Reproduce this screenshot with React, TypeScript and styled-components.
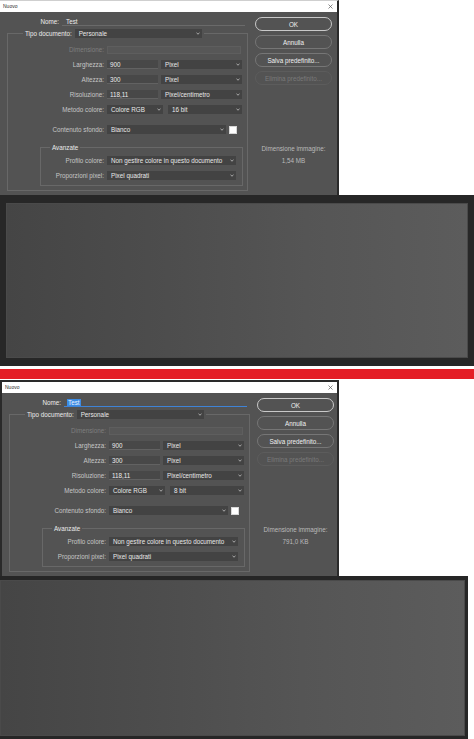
import React from 'react';
import styled, { createGlobalStyle } from 'styled-components';

const Global = createGlobalStyle`
  html, body { margin: 0; padding: 0; background: #ffffff; }
  body {
    width: 474px; height: 739px; overflow: hidden;
    font-family: "Liberation Sans", Arial, sans-serif;
  }
  * { box-sizing: border-box; }
`;

const Page = styled.div`
  display: flex;
  flex-direction: column;
  width: 474px;
  height: 739px;
  background: #ffffff;
`;

const TopRow = styled.div`
  display: flex;
  height: 195px;
`;

const Dialog = styled.div<{ $framed?: boolean }>`
  width: 339px;
  height: ${p => (p.$framed ? 196 : 195)}px;
  display: flex;
  flex-direction: column;
  background: #535353;
  border-right: 2px solid #2a2a2a;
  border-left: ${p => (p.$framed ? '2px solid #2a2a2a' : '0')};
  border-top: ${p => (p.$framed ? '2px solid #2a2a2a' : '1px solid #cfcfcf')};
`;

const TitleBar = styled.div`
  height: 11px;
  flex: none;
  background: #ffffff;
  display: flex;
  align-items: center;
  justify-content: space-between;
  padding: 0 4px 0 3px;
`;

const TitleText = styled.span`
  font-size: 5px;
  line-height: 11px;
  color: #2b2b2b;
`;

const DialogBody = styled.div`
  flex: 1;
  display: flex;
`;

const FormColumn = styled.div`
  width: 255px;
  display: flex;
  flex-direction: column;
`;

const NameRow = styled.div`
  display: flex;
  align-items: stretch;
  height: 9px;
  margin-top: 5px;
  gap: 3px;
`;

type Tone = 'bright' | 'normal' | 'disabled';

const Label = styled.span<{ $width: number; $tone?: Tone }>`
  width: ${p => p.$width}px;
  flex: none;
  text-align: right;
  font-size: 6.3px;
  line-height: 9px;
  white-space: nowrap;
  color: ${p => (p.$tone === 'bright' ? '#ededed' : p.$tone === 'disabled' ? '#7e7e7e' : '#c6c6c6')};
`;

const NameField = styled.div<{ $focused?: boolean }>`
  width: 183px;
  display: flex;
  align-items: center;
  padding-left: 3px;
  border-bottom: 1px solid ${p => (p.$focused ? '#3f83d6' : '#6a6a6a')};
`;

const NameValue = styled.span<{ $selected?: boolean }>`
  font-size: 6.3px;
  line-height: 7px;
  padding: 0 1px;
  color: ${p => (p.$selected ? '#eaf3ff' : '#ededed')};
  background: ${p => (p.$selected ? '#3b8be4' : 'transparent')};
`;

const GroupBox = styled.div<{ $ml: number; $mt: number; $w: number; $pb: number }>`
  display: flex;
  flex-direction: column;
  margin-left: ${p => p.$ml}px;
  margin-top: ${p => p.$mt}px;
  width: ${p => p.$w}px;
  padding-bottom: ${p => p.$pb}px;
  border: 1px solid #686868;
`;

const GroupHeader = styled.div<{ $ml: number }>`
  display: flex;
  align-items: center;
  gap: 3px;
  height: 9px;
  margin-top: -5px;
  margin-left: ${p => p.$ml}px;
  padding: 0 2px;
  width: fit-content;
  background: #535353;
`;

const HeaderText = styled.span`
  font-size: 6.3px;
  line-height: 9px;
  color: #ebebeb;
  white-space: nowrap;
`;

const Rows = styled.div<{ $pt: number }>`
  display: flex;
  flex-direction: column;
  gap: 6px;
  padding-top: ${p => p.$pt}px;
`;

const Row = styled.div<{ $mt?: number }>`
  display: flex;
  align-items: center;
  gap: 3px;
  height: 9px;
  margin-top: ${p => p.$mt ?? 0}px;
`;

const TextInput = styled.div<{ $w: number }>`
  width: ${p => p.$w}px;
  height: 9px;
  flex: none;
  display: flex;
  align-items: center;
  padding-left: 3px;
  background: #484848;
  border-bottom: 1px solid #626262;
  font-size: 6.3px;
  color: #ececec;
`;

const DisabledField = styled.div<{ $w: number }>`
  width: ${p => p.$w}px;
  height: 8px;
  flex: none;
  background: #575757;
  border: 1px solid #5e5e5e;
`;

const SelectBox = styled.div<{ $w: number; $ml?: number }>`
  width: ${p => p.$w}px;
  height: 9px;
  flex: none;
  margin-left: ${p => p.$ml ?? 0}px;
  display: flex;
  align-items: center;
  justify-content: space-between;
  padding: 0 2px 0 4px;
  background: #434343;
  font-size: 6.3px;
  color: #e8e8e8;
  white-space: nowrap;
`;

const Swatch = styled.div`
  width: 8px;
  height: 8px;
  flex: none;
  background: #ffffff;
  border: 1px solid #d6d6d6;
`;

const ButtonColumn = styled.div`
  width: 77px;
  display: flex;
  flex-direction: column;
  gap: 4px;
  padding-top: 5px;
`;

type BtnKind = 'primary' | 'normal' | 'disabled';

const PillButton = styled.div<{ $kind: BtnKind }>`
  height: 14px;
  border-radius: 7px;
  display: flex;
  align-items: center;
  justify-content: center;
  font-size: 6.3px;
  border: 1px solid ${p => (p.$kind === 'primary' ? '#c9c9c9' : p.$kind === 'normal' ? '#767676' : '#5c5c5c')};
  color: ${p => (p.$kind === 'disabled' ? '#7a7a7a' : '#f0f0f0')};
`;

const SizeInfo = styled.div`
  display: flex;
  flex-direction: column;
  align-items: center;
  gap: 4px;
  margin-top: 56px;
`;

const InfoText = styled.span`
  font-size: 6.3px;
  line-height: 8px;
  color: #bababa;
  white-space: nowrap;
`;

const CanvasBand = styled.div`
  height: 171px;
  background: #272727;
  padding: 8px 6px;
  display: flex;
`;

const CanvasRect = styled.div`
  flex: 1;
  background: linear-gradient(90deg, #454545 0%, #4d4d4d 35%, #555555 65%, #5c5c5c 100%);
  border: 1px solid #4a4a4a;
`;

const RedBand = styled.div`
  height: 10px;
  margin: 3px 0 1px;
  background: #e41d25;
`;

const CanvasFrame = styled.div`
  width: 468px;
  height: 163px;
  display: flex;
  border-top: 4px solid #262626;
  border-right: 3px solid #262626;
  border-bottom: 3px solid #262626;
`;

const Chevron = () => (
  <svg width="4" height="3" viewBox="0 0 4 3">
    <path d="M0.5 0.8 L2 2.2 L3.5 0.8" fill="none" stroke="#c8c8c8" strokeWidth="0.8" />
  </svg>
);

const CloseIcon = () => (
  <svg width="5" height="5" viewBox="0 0 5 5">
    <path d="M0.5 0.5 L4.5 4.5 M4.5 0.5 L0.5 4.5" fill="none" stroke="#5a5a5a" strokeWidth="0.7" />
  </svg>
);

const Select = ({ w, ml, children }: { w: number; ml?: number; children: React.ReactNode }) => (
  <SelectBox $w={w} $ml={ml}>
    <span>{children}</span>
    <Chevron />
  </SelectBox>
);

type DialogProps = { framed?: boolean; nameSelected?: boolean; bits: string; size: string };

function NewDocDialog({ framed, nameSelected, bits, size }: DialogProps) {
  return (
    <Dialog $framed={framed}>
      <TitleBar>
        <TitleText>Nuovo</TitleText>
        <CloseIcon />
      </TitleBar>
      <DialogBody>
        <FormColumn>
          <NameRow>
            <Label $width={59} $tone="bright">Nome:</Label>
            <NameField $focused={nameSelected}>
              <NameValue $selected={nameSelected}>Test</NameValue>
            </NameField>
          </NameRow>
          <GroupBox $ml={7} $mt={7} $w={241} $pb={4}>
            <GroupHeader $ml={15}>
              <HeaderText>Tipo documento:</HeaderText>
              <Select w={127}>Personale</Select>
            </GroupHeader>
            <Rows $pt={7}>
              <Row>
                <Label $width={96} $tone="disabled">Dimensione:</Label>
                <DisabledField $w={134} />
              </Row>
              <Row>
                <Label $width={96}>Larghezza:</Label>
                <TextInput $w={51}>900</TextInput>
                <Select w={81}>Pixel</Select>
              </Row>
              <Row>
                <Label $width={96}>Altezza:</Label>
                <TextInput $w={51}>300</TextInput>
                <Select w={81}>Pixel</Select>
              </Row>
              <Row>
                <Label $width={96}>Risoluzione:</Label>
                <TextInput $w={51}>118,11</TextInput>
                <Select w={81}>Pixel/centimetro</Select>
              </Row>
              <Row>
                <Label $width={96}>Metodo colore:</Label>
                <Select w={56}>Colore RGB</Select>
                <Select w={74} ml={2}>{bits}</Select>
              </Row>
              <Row $mt={5}>
                <Label $width={96}>Contenuto sfondo:</Label>
                <Select w={119}>Bianco</Select>
                <Swatch />
              </Row>
            </Rows>
            <GroupBox $ml={32} $mt={13} $w={203} $pb={5}>
              <GroupHeader $ml={9}>
                <HeaderText>Avanzate</HeaderText>
              </GroupHeader>
              <Rows $pt={4}>
                <Row>
                  <Label $width={63}>Profilo colore:</Label>
                  <Select w={129}>Non gestire colore in questo documento</Select>
                </Row>
                <Row>
                  <Label $width={63}>Proporzioni pixel:</Label>
                  <Select w={129}>Pixel quadrati</Select>
                </Row>
              </Rows>
            </GroupBox>
          </GroupBox>
        </FormColumn>
        <ButtonColumn>
          <PillButton $kind="primary">OK</PillButton>
          <PillButton $kind="normal">Annulla</PillButton>
          <PillButton $kind="normal">Salva predefinito...</PillButton>
          <PillButton $kind="disabled">Elimina predefinito...</PillButton>
          <SizeInfo>
            <InfoText>Dimensione immagine:</InfoText>
            <InfoText>{size}</InfoText>
          </SizeInfo>
        </ButtonColumn>
      </DialogBody>
    </Dialog>
  );
}

export default function App() {
  return (
    <>
      <Global />
      <Page>
        <TopRow>
          <NewDocDialog bits="16 bit" size="1,54 MB" />
        </TopRow>
        <CanvasBand>
          <CanvasRect />
        </CanvasBand>
        <RedBand />
        <NewDocDialog framed nameSelected bits="8 bit" size="791,0 KB" />
        <CanvasFrame>
          <CanvasRect />
        </CanvasFrame>
      </Page>
    </>
  );
}
